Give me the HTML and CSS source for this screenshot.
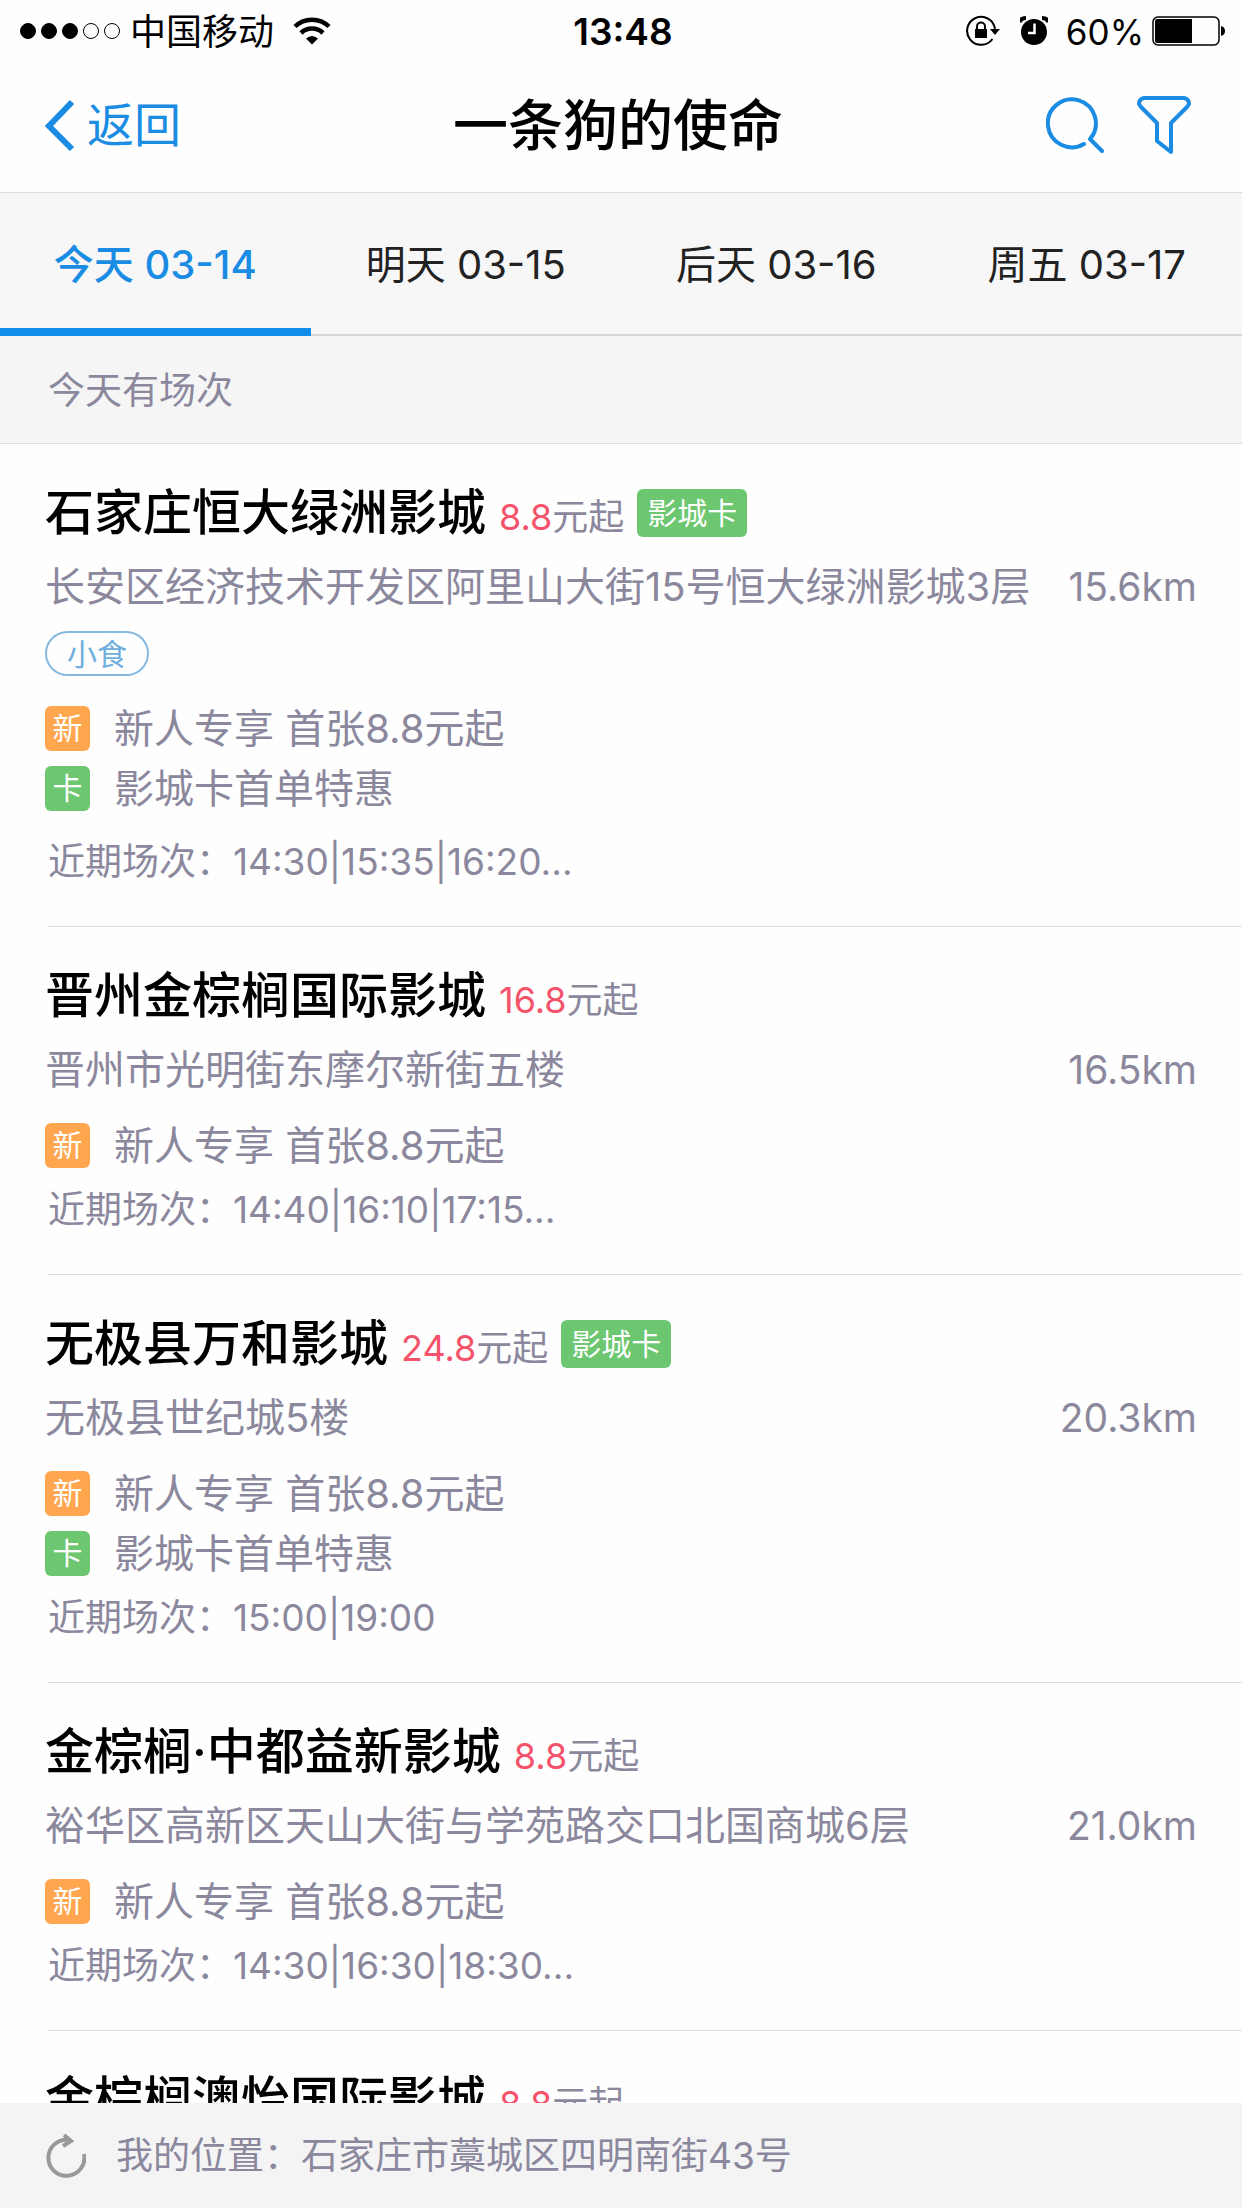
FILE: index.html
```html
<!DOCTYPE html>
<html lang="zh-CN">
<head>
    <meta charset="UTF-8">
    <meta name="viewport" content="width=device-width, initial-scale=1.0">
    <title>一条狗的使命</title>
    <link rel="stylesheet" href="styles.css">
</head>
<body>
    <div class="status-bar">
        <div class="status-left">
            <div class="signal">
                <i class="dot on"></i><i class="dot on"></i><i class="dot on"></i><i class="dot"></i><i class="dot"></i>
            </div>
            <span class="carrier">中国移动</span>
            <svg class="wifi" width="38" height="28" viewBox="0 0 38 28" aria-hidden="true">
                <path d="M2 9.500A24.500 24.500 0 0 1 36 9.500" fill="none" stroke="#000" stroke-width="4.500"/>
                <path d="M8 16A16 16 0 0 1 30 16" fill="none" stroke="#000" stroke-width="4.500"/>
                <path d="M13 21.500Q19 16.500 25 21.500L19 27.500Z"/>
            </svg>
        </div>
        <span class="clock">13:48</span>
        <div class="status-right">
            <svg width="34" height="32" viewBox="0 0 34 32" aria-hidden="true">
                <path d="M29 14A14 14 0 1 0 26.500 24" fill="none" stroke="#000" stroke-width="2"/>
                <path d="M24 14h10l-5 6z"/>
                <rect x="9" y="14" width="12" height="9"/>
                <path d="M11 15v-3.500a4 4 0 0 1 8 0V15" fill="none" stroke="#000" stroke-width="2"/>
            </svg>
            <svg class="alarm" width="28" height="30" viewBox="0 0 28 30" aria-hidden="true">
                <circle cx="14" cy="16" r="13"/>
                <path d="M0 6.500Q0 2 6 2M22 2Q28 2 28 6.500" fill="none" stroke="#000" stroke-width="4"/>
                <path d="M14.500 7.500v9.500H8" fill="none" stroke="#fff" stroke-width="2.500"/>
            </svg>
            <span class="percent">60%</span>
            <svg class="battery" width="74" height="30" viewBox="0 0 74 30" aria-hidden="true">
                <rect x="1" y="1" width="66" height="28" rx="5" fill="none" stroke="#000" stroke-width="1.500"/>
                <path d="M5 3H40V27H5Q3 27 3 25V5Q3 3 5 3Z"/>
                <path d="M69 10Q73 11 73 15T69 20Z"/>
            </svg>
        </div>
    </div>

    <header class="nav-bar">
        <a class="back" href="#">
            <svg width="30" height="52" viewBox="0 0 30 52" aria-hidden="true">
                <path d="M27 3L4 27L27 50" fill="none" stroke="currentColor" stroke-width="6"/>
            </svg>
            返回
        </a>
        <h1>一条狗的使命</h1>
        <div class="nav-actions">
            <button type="button" aria-label="搜索">
                <svg width="59" height="58" viewBox="0 0 59 58">
                    <path d="M38 48A24 24 0 1 1 44 43L56 55"/>
                </svg>
            </button>
            <button type="button" aria-label="筛选">
                <svg width="54" height="58" viewBox="0 0 54 58">
                    <path d="M7 2H47Q52 3 52 8L50 11L34 27V56L20 45V27L4 11L2 8Q2 3 7 2Z"/>
                </svg>
            </button>
        </div>
    </header>

    <nav class="date-tabs">
        <a class="active" href="#">今天 03-14</a>
        <a href="#">明天 03-15</a>
        <a href="#">后天 03-16</a>
        <a href="#">周五 03-17</a>
    </nav>

    <p class="section-title">今天有场次</p>

    <main>
        <ul class="cinema-list">
            <li class="cinema">
                <div class="cinema-head">
                    <h2>石家庄恒大绿洲影城</h2>
                    <span class="price"><b>8.8</b>元起</span>
                    <span class="card-badge">影城卡</span>
                </div>
                <div class="cinema-address">
                    <span>长安区经济技术开发区阿里山大街15号恒大绿洲影城3层</span>
                    <span class="distance">15.6km</span>
                </div>
                <div class="tags"><span class="tag">小食</span></div>
                <ul class="promos">
                    <li><i class="icon-new">新</i>新人专享 首张8.8元起</li>
                    <li><i class="icon-card">卡</i>影城卡首单特惠</li>
                </ul>
                <p class="times">近期场次：14:30|15:35|16:20...</p>
            </li>
            <li class="cinema">
                <div class="cinema-head">
                    <h2>晋州金棕榈国际影城</h2>
                    <span class="price"><b>16.8</b>元起</span>
                </div>
                <div class="cinema-address">
                    <span>晋州市光明街东摩尔新街五楼</span>
                    <span class="distance">16.5km</span>
                </div>
                <ul class="promos">
                    <li><i class="icon-new">新</i>新人专享 首张8.8元起</li>
                </ul>
                <p class="times">近期场次：14:40|16:10|17:15...</p>
            </li>
            <li class="cinema">
                <div class="cinema-head">
                    <h2>无极县万和影城</h2>
                    <span class="price"><b>24.8</b>元起</span>
                    <span class="card-badge">影城卡</span>
                </div>
                <div class="cinema-address">
                    <span>无极县世纪城5楼</span>
                    <span class="distance">20.3km</span>
                </div>
                <ul class="promos">
                    <li><i class="icon-new">新</i>新人专享 首张8.8元起</li>
                    <li><i class="icon-card">卡</i>影城卡首单特惠</li>
                </ul>
                <p class="times">近期场次：15:00|19:00</p>
            </li>
            <li class="cinema">
                <div class="cinema-head">
                    <h2>金棕榈·中都益新影城</h2>
                    <span class="price"><b>8.8</b>元起</span>
                </div>
                <div class="cinema-address">
                    <span>裕华区高新区天山大街与学苑路交口北国商城6层</span>
                    <span class="distance">21.0km</span>
                </div>
                <ul class="promos">
                    <li><i class="icon-new">新</i>新人专享 首张8.8元起</li>
                </ul>
                <p class="times">近期场次：14:30|16:30|18:30...</p>
            </li>
            <li class="cinema">
                <div class="cinema-head">
                    <h2>金棕榈澳怡国际影城</h2>
                    <span class="price"><b>8.8</b>元起</span>
                </div>
            </li>
        </ul>
    </main>

    <footer class="location-bar">
        <button type="button" aria-label="刷新位置">
            <svg width="40" height="46" viewBox="0 0 40 46">
                <path d="M38 21A18 18 0 1 1 23 7"/>
                <path d="M18 2L25 8L17 13"/>
            </svg>
        </button>
        <span>我的位置：石家庄市藁城区四明南街43号</span>
    </footer>
</body>
</html>
```

FILE: styles.css
```css
:root {
    --blue: #1a8ce3;
    --gray: #8b889d;
    --red: #f5536c;
    --green: #6dc771;
    --orange: #ffa64f;
    --line: #dddde0;
    --side: 45px;
}
* {
    box-sizing: border-box;
    margin: 0;
    padding: 0;
}
body {
    display: flex;
    flex-direction: column;
    height: 100vh;
    background-color: #fefefe;
    color: #000;
    font-family: Inter, "Noto Sans CJK SC", sans-serif;
    font-size: 37px;
}
a {
    color: inherit;
    text-decoration: none;
}
ul {
    list-style: none;
}
i {
    font-style: normal;
}
svg {
    display: block;
    flex: none;
}
button {
    border: none;
    background: none;
    cursor: pointer;
}

/* status bar */
.status-bar {
    display: grid;
    grid-template-columns: 1fr auto 1fr;
    align-items: center;
    height: 60px;
    padding: 0 16px 0 20px;
    line-height: 60px;
}
.status-left,
.status-right {
    display: flex;
    align-items: center;
}
.status-right {
    justify-content: flex-end;
}
.signal {
    display: flex;
    gap: 5px;
    margin-right: 10px;
}
.dot {
    width: 16px;
    height: 16px;
    border: 1px solid #000;
    border-radius: 50%;
}
.dot.on {
    background-color: #000;
}
.carrier {
    padding-top: 2px;
    font-size: 36px;
}
.wifi {
    margin-left: 19px;
}
.clock {
    padding-top: 2px;
    font-weight: 600;
}
.alarm {
    margin: 0 18px 0 20px;
}
.percent {
    padding-top: 2px;
    font-size: 35px;
}
.battery {
    margin-left: 8px;
}

/* title bar */
.nav-bar {
    display: grid;
    grid-template-columns: 1fr auto 1fr;
    align-items: center;
    height: 133px;
    padding: 0 51px 2px 45px;
    border-bottom: 1px solid var(--line);
    line-height: 60px;
}
.back {
    display: flex;
    align-items: center;
    gap: 12px;
    color: var(--blue);
    font-size: 47px;
}
h1 {
    font-size: 55px;
    font-weight: 500;
}
.nav-actions {
    display: flex;
    justify-content: flex-end;
    gap: 32px;
}
.nav-actions svg {
    fill: none;
    stroke: var(--blue);
    stroke-width: 4;
    stroke-linecap: round;
    stroke-linejoin: round;
}

/* dates */
.date-tabs {
    display: grid;
    grid-template-columns: repeat(4, 1fr);
    background-color: #f7f7f7;
    box-shadow: inset 0 -2px #d8d8d8;
    color: #222;
    font-size: 40px;
    line-height: 127px;
    text-align: center;
}
.date-tabs a {
    padding-top: 8px;
    border-bottom: 8px solid transparent;
}
.date-tabs .active {
    border-color: #108ee9;
    color: var(--blue);
    font-weight: 500;
}
.section-title {
    padding: 2px 48px 0;
    border-bottom: 1px solid var(--line);
    background-color: #f5f5f6;
    color: var(--gray);
    line-height: 105px;
}

/* cinemas */
main {
    flex: 1;
    min-height: 0;
    overflow-y: auto;
    scrollbar-width: none;
}
.cinema {
    padding: 33px var(--side) 0;
    color: var(--gray);
}
.cinema::after {
    content: "";
    display: block;
    height: 1px;
    margin: 41px calc(var(--side) * -1) 0 3px;
    background-color: var(--line);
}
.cinema-head {
    display: flex;
    align-items: baseline;
    gap: 13px;
    height: 72px;
    line-height: 72px;
}
h2 {
    color: #000;
    font-size: 49px;
    font-weight: 500;
}
.price {
    font-size: 36px;
}
.price b {
    color: var(--red);
    font-weight: 400;
}
.card-badge {
    align-self: center;
    height: 48px;
    padding: 0 10px;
    border-radius: 6px;
    background-color: var(--green);
    color: #fff;
    font-size: 30px;
    line-height: 48px;
}
.cinema-address {
    display: flex;
    justify-content: space-between;
    margin-top: 8px;
    font-size: 40px;
    line-height: 60px;
}
.distance {
    font-size: 39px;
}
.tags {
    display: flex;
    margin-top: 14px;
}
.tag {
    height: 45px;
    padding: 0 20px;
    border: 2px solid #85b9df;
    border-radius: 23px;
    color: #6fafdd;
    font-size: 30px;
    line-height: 43px;
}
.promos {
    display: grid;
    gap: 15px;
    margin-top: 23px;
    font-size: 40px;
    line-height: 45px;
}
.promos li {
    display: flex;
    gap: 24px;
    height: 45px;
}
.promos i {
    width: 45px;
    border-radius: 6px;
    color: #fff;
    font-size: 30px;
    text-align: center;
}
.icon-new {
    background-color: var(--orange);
}
.icon-card {
    background-color: var(--green);
}
.times {
    margin-top: 19px;
    padding-left: 3px;
    line-height: 46px;
}
.tags + .promos {
    margin-top: 30px;
}
.tags ~ .times {
    margin-top: 28px;
}

/* current location */
.location-bar {
    display: flex;
    align-items: center;
    gap: 30px;
    height: 105px;
    padding: 0 46px;
    background-color: #f4f4f5;
    color: var(--gray);
    line-height: 60px;
}
.location-bar svg {
    fill: none;
    stroke: #999;
    stroke-width: 4;
}
```
